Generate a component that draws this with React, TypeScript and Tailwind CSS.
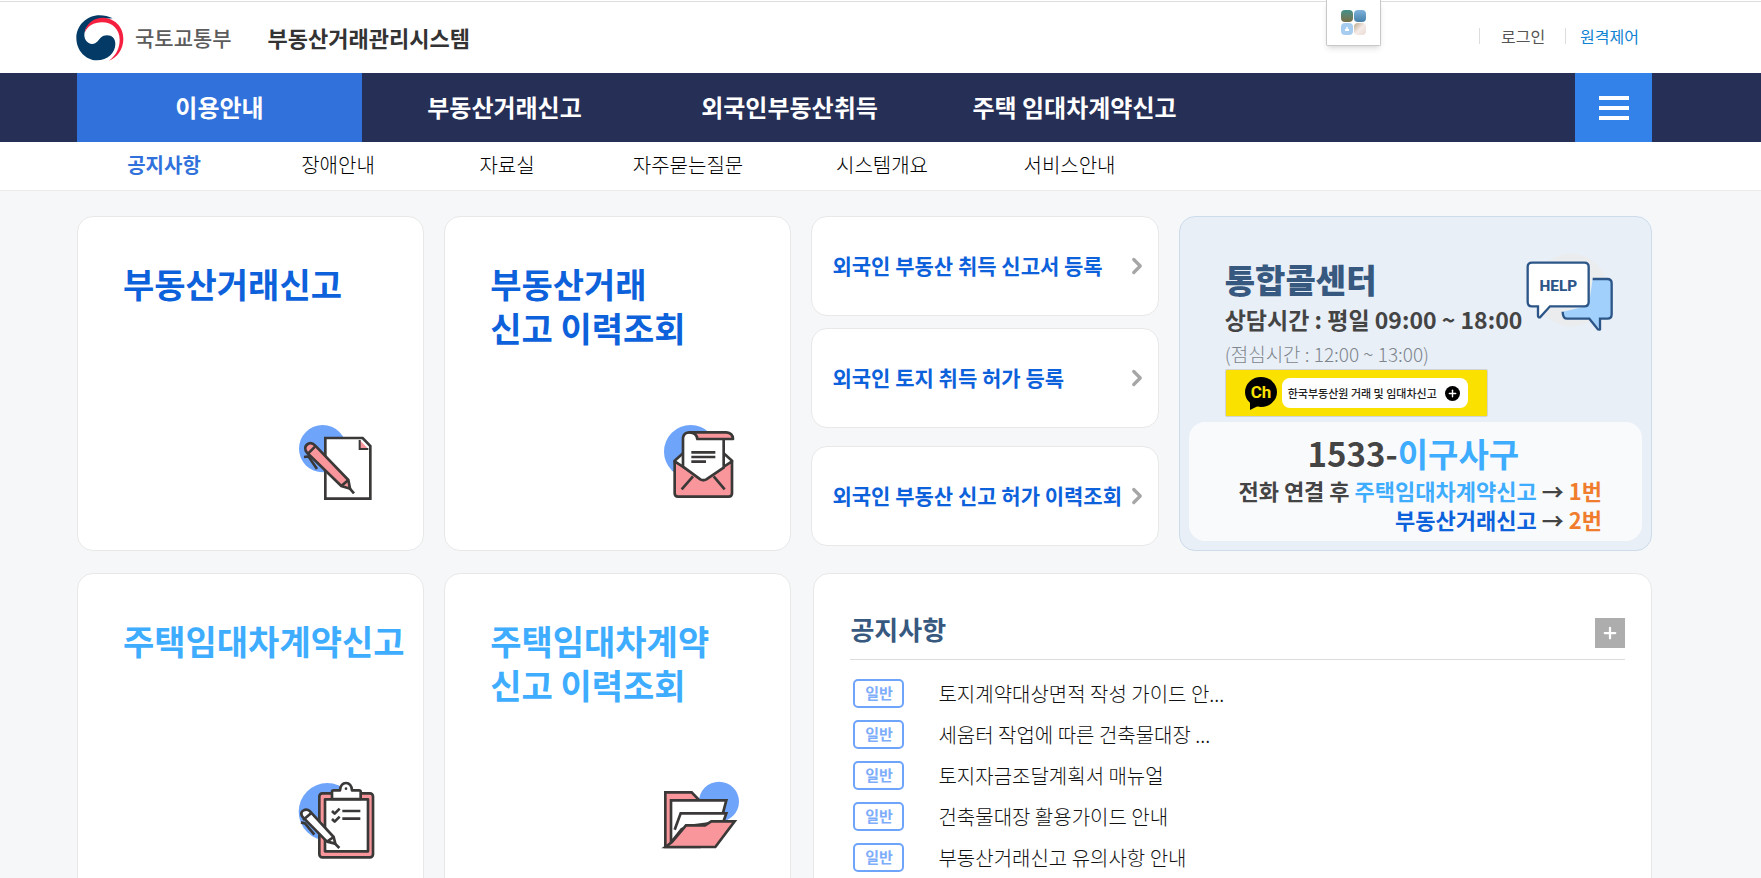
import type { ReactNode } from 'react'
import { ChevronRight, Plus } from 'lucide-react'

const mainMenu = ['이용안내', '부동산거래신고', '외국인부동산취득', '주택 임대차계약신고']

const subMenu = [
  { label: '공지사항', width: 'w-[174px]' },
  { label: '장애안내', width: 'w-[174px]' },
  { label: '자료실', width: 'w-[164px]' },
  { label: '자주묻는질문', width: 'w-[198px]' },
  { label: '시스템개요', width: 'w-[190px]' },
  { label: '서비스안내', width: 'w-[185px]' },
]

const notices = [
  '토지계약대상면적 작성 가이드 안...',
  '세움터 작업에 따른 건축물대장 ...',
  '토지자금조달계획서 매뉴얼',
  '건축물대장 활용가이드 안내',
  '부동산거래신고 유의사항 안내',
]

function Logo() {
  return (
    <svg className="h-[46px] w-12" viewBox="50 46 144 138" aria-hidden="true">
      <path
        fill="#033a66"
        d="M160 56C148 50 134 47 121 47C82 47 51 78 51 115C51 153 80 182 112 182C145 182 168 160 168 133C168 117 158 107 143 107C127 107 122 117 115 125C108 133 97 135 88 130C77 124 73 111 76 98C80 77 100 62 125 58Z"
      />
      <path
        fill="#f5203f"
        d="M76 100C78 76 98 56 128 54C165 54 192 80 192 117C192 148 175 172 149 183C169 167 181 147 181 120C181 90 160 68 128 68C104 68 83 80 76 100Z"
      />
    </svg>
  )
}

function WriteIcon() {
  return (
    <svg className="h-[120px] w-[130px]" viewBox="0 0 390 360" fill="none" stroke="#3b3838" strokeWidth="8" aria-hidden="true">
      <circle cx="155" cy="146" r="71" fill="#6fa4fb" stroke="none" />
      <path fill="#fff" d="M163 114H275L298 138V296H163Z" />
      <path fill="#f9969b" strokeWidth="6" d="M266 120V147H292" />
      <path fill="#f9969b" d="M104 152C98 134 118 122 132 136L232 240L237 266L211 258L108 158Z" />
      <path d="M109 163L132 140M211 258L232 240M236 265L249 280" />
      <path strokeWidth="8" d="M99 171L112 169L138 207" />
    </svg>
  )
}

function MailIcon() {
  return (
    <svg className="h-[120px] w-[130px]" viewBox="0 0 390 360" fill="none" stroke="#3b3838" strokeWidth="8" strokeLinejoin="round" aria-hidden="true">
      <circle cx="158" cy="155" r="80" fill="#6fa4fb" stroke="none" />
      <path fill="#fff" d="M110 182L135 160H257L282 182L270 250H120Z" />
      <path fill="#f9969b" d="M110 184L196 240L282 184V280Q282 290 272 290H120Q110 290 110 280Z" />
      <path d="M165 229L131 268M227 229L260 268" />
      <path fill="#fff" d="M135 200V114Q137 97 155 97H240L257 118V203L205 238Q196 243 187 238Z" />
      <path fill="#f9969b" d="M155 97H265Q284 98 285 117H178Q176 98 155 97Z" />
      <path d="M160 157H232M160 171H232M160 185H204" />
    </svg>
  )
}

function ClipboardIcon() {
  return (
    <svg className="h-[120px] w-[130px]" viewBox="0 -9 390 360" fill="none" stroke="#3b3838" strokeWidth="8" strokeLinejoin="round" aria-hidden="true">
      <circle cx="169" cy="155" r="86" fill="#6fa4fb" stroke="none" />
      <rect x="145" y="100" width="161" height="192" rx="9" fill="#f9969b" />
      <path fill="#fff" d="M162 118H291V274H162Z" />
      <path fill="#fff" d="M183 117V95Q183 91 188 91H207Q209 69 225 69Q241 69 243 91H264Q269 91 269 95V117Z" />
      <circle cx="225" cy="86" r="4" fill="#3b3838" stroke="none" />
      <path d="M214 153H268M214 176H268M183 153L191 161L206 146M183 177L191 185L206 170" />
      <path stroke="#fff" strokeWidth="16" d="M145 188L176 250" />
      <path fill="#fff" d="M94 170C84 154 104 142 117 154L188 231L193 251L168 245Z" />
      <path d="M96 180L122 158M168 245L188 231M189 248L205 264" />
      <path strokeWidth="8" d="M90 187L102 190L130 224" />
    </svg>
  )
}

function FolderIcon() {
  return (
    <svg className="h-[120px] w-[130px]" viewBox="0 -9 390 360" fill="none" stroke="#3b3838" strokeWidth="8" aria-hidden="true">
      <circle cx="243" cy="125" r="60" fill="#6fa4fb" stroke="none" />
      <path fill="#f9969b" d="M82 97H161L184 121V261H82Z" />
      <path fill="#fff" d="M99 121H265L245 196H140L99 248Z" />
      <path fill="#fff" d="M110 209L128 160H265L256 185L140 200" />
      <path fill="#f9969b" d="M82 261L102 246L144 196H201L220 184H290L232 261Z" />
    </svg>
  )
}

function HelpIcon() {
  return (
    <svg className="h-[78px] w-[88px]" viewBox="1068 142 264 234" aria-hidden="true">
      <circle cx="1203" cy="253" r="109" fill="#ebecee" />
      <path
        d="M1268 220H1312Q1325 220 1325 233V326Q1325 339 1312 339H1290V371L1262 339H1192Q1178 339 1178 318L1256 300Z"
        fill="#a2d0fd"
      />
      <path
        d="M1268 220H1312Q1325 220 1325 233V326Q1325 339 1312 339H1290V371Q1284 374 1280 366L1258 339H1192Q1178 339 1178 318"
        fill="none"
        stroke="#2d5688"
        strokeWidth="7"
      />
      <path
        d="M1086 171H1243Q1256 171 1256 184V289Q1256 302 1243 302H1140L1110 335Q1104 336 1104 330V302H1086Q1073 302 1073 289V184Q1073 171 1086 171Z"
        fill="#fff"
        stroke="#2d5688"
        strokeWidth="7"
      />
      <text x="1165" y="256" textAnchor="middle" fontSize="46" fontWeight="800" fill="#2d5688" className="font-['Roboto']">
        HELP
      </text>
    </svg>
  )
}

function ServiceCard({ children, icon, color }: { children: ReactNode; icon: ReactNode; color: string }) {
  return (
    <a
      href="#service"
      className="flex h-[335px] flex-col justify-between rounded-2xl border border-[#e8e8e8] bg-white pt-[45px] pr-[22px] pb-[30px] pl-[45px]"
    >
      <h2 className={`text-[34px] leading-[44px] font-bold whitespace-nowrap ${color}`}>{children}</h2>
      <span className="self-end">{icon}</span>
    </a>
  )
}

function QuickLink({ children, className = '' }: { children: ReactNode; className?: string }) {
  return (
    <a
      href="#quick"
      className={`flex h-[100px] items-center justify-between rounded-2xl border border-[#e8e8e8] bg-white pr-2 pl-5 text-[21px] font-bold whitespace-nowrap text-[#0d61db] ${className}`}
    >
      {children}
      <ChevronRight className="size-[26px] shrink-0 text-[#a6a6a6]" strokeWidth={3} />
    </a>
  )
}

function Header() {
  return (
    <header className="border-b border-[#ebebeb] bg-white">
      <div className="relative mt-px flex h-[72px] items-center border-t border-[#ddd] pr-[122px] pl-[76px]">
        <a href="#home" className="flex items-center">
          <Logo />
          <span className="ml-[11px] text-[21px] font-medium text-[#5c5c5c]">국토교통부</span>
          <span className="ml-9 text-[22px] font-bold text-[#333]">부동산거래관리시스템</span>
        </a>

        <button
          type="button"
          aria-label="바로가기"
          className="absolute -top-[2px] left-[1326px] flex h-[46px] w-[55px] items-center justify-center rounded-b-xs border border-t-0 border-[#c8c8c8] bg-white shadow-md"
        >
          <span className="grid grid-cols-2 gap-px">
            <span className="size-3 rounded-sm bg-linear-to-b from-[#3c9089] to-[#766f45]" />
            <span className="size-3 rounded-sm bg-linear-to-b from-[#7eb2dc] to-[#4580a8]" />
            <span className="flex size-3 flex-col items-center justify-center rounded-sm bg-[#a6cdef]">
              <span className="size-[2px] rounded-full bg-white" />
              <span className="h-[2px] w-1 bg-white" />
            </span>
            <span className="size-3 rounded-sm bg-linear-to-br from-[#b9a78f] via-[#f5ebe6] to-[#eadbd5]" />
          </span>
        </button>

        <div className="ml-auto flex items-center pb-1 text-[16px] leading-4">
          <a href="#login" className="border-l border-[#ddd] pr-5 pl-[21px] text-[#555]">
            로그인
          </a>
          <a href="#remote" className="border-l border-[#ddd] pl-[14px] text-[#0f82d2]">
            원격제어
          </a>
        </div>
      </div>

      <nav className="flex h-[69px] bg-[#262f56] pr-[109px] pl-[77px]">
        {mainMenu.map((item, i) => (
          <a
            key={item}
            href="#menu"
            className={`flex w-[285px] items-center justify-center pb-[2px] text-[24px] font-bold text-white ${i === 0 ? 'bg-[#3171db]' : ''}`}
          >
            {item}
          </a>
        ))}
        <button type="button" aria-label="전체메뉴" className="ml-auto flex w-[77px] flex-col items-center justify-center gap-[6px] bg-[#3382e9]">
          <span className="h-1 w-[30px] bg-white" />
          <span className="h-1 w-[30px] bg-white" />
          <span className="h-1 w-[30px] bg-white" />
        </button>
      </nav>

      <nav className="flex h-12 items-center pb-[2px] pl-[77px] text-[20px] font-light text-black">
        {subMenu.map((item, i) => (
          <a key={item.label} href="#sub" className={`${item.width} text-center ${i === 0 ? 'font-bold text-[#3171db]' : ''}`}>
            {item.label}
          </a>
        ))}
      </nav>
    </header>
  )
}

function CallCenter() {
  return (
    <section className="flex h-[335px] flex-col rounded-2xl border border-[#cddceb] bg-[#e8eff7] px-[9px] pb-[9px] whitespace-nowrap">
      <div className="flex justify-between pt-9 pr-7 pl-9">
        <div>
          <h2 className="mt-[6px] text-[33px] leading-10 font-black text-[#37587f]">통합콜센터</h2>
          <p className="text-[23px] leading-10 font-bold text-[#444]">상담시간 : 평일 09:00 ~ 18:00</p>
          <p className="text-[19px] leading-[30px] font-light text-[#7f858c]">(점심시간 : 12:00 ~ 13:00)</p>
        </div>
        <div className="-ml-6">
          <HelpIcon />
        </div>
      </div>
      <a href="#kakao" className="ml-9 flex h-12 w-[263px] items-center rounded-xs border border-[#d3d3d3] bg-[#fae100] pl-[18px]">
        <svg className="size-[34px]" viewBox="0 0 34 34" aria-hidden="true">
          <ellipse cx="17" cy="16" rx="16" ry="15" />
          <path d="M6 25V34L18 28Z" />
          <text x="17" y="22" textAnchor="middle" fontSize="17" fontWeight="700" fill="#fae100" className="font-['Roboto']">
            Ch
          </text>
        </svg>
        <span className="ml-1 flex h-[30px] items-center rounded-lg bg-white pr-2 pl-[6px] text-[11px] font-medium text-[#222]">
          한국부동산원 거래 및 임대차신고
          <span className="ml-2 flex size-[15px] items-center justify-center rounded-full bg-black">
            <Plus className="size-[11px] text-white" strokeWidth={3} />
          </span>
        </span>
      </a>
      <div className="mt-auto h-[119px] rounded-2xl bg-[#f9fafc] pt-[9px] pr-10 font-bold text-[#444]">
        <p className="pl-9 text-center text-[33px] leading-[45px]">
          1533-<span className="text-[#3fadff]">이구사구</span>
        </p>
        <p className="text-right text-[22px] leading-[29px]">
          전화 연결 후 <span className="text-[#3fadff]">주택임대차계약신고</span> → <span className="text-[#f07d2e]">1번</span>
        </p>
        <p className="text-right text-[22px] leading-[29px]">
          <span className="text-[#0d61db]">부동산거래신고</span> → <span className="text-[#f07d2e]">2번</span>
        </p>
      </div>
    </section>
  )
}

function NoticeBoard() {
  return (
    <section className="col-span-2 ml-[2px] rounded-2xl border border-[#e8e8e8] bg-white pt-9 pr-[26px] pl-9">
      <div className="flex h-[50px] items-center justify-between border-b border-[#ddd]">
        <h2 className="pb-3 text-[26px] leading-9 font-bold text-[#37587f]">공지사항</h2>
        <button type="button" aria-label="공지사항 더보기" className="mb-1 flex size-[30px] items-center justify-center bg-[#adadad] text-white">
          <Plus className="size-[18px]" strokeWidth={3} />
        </button>
      </div>
      <ul className="mt-[13px]">
        {notices.map((title) => (
          <li key={title} className="flex h-[41px] items-center pl-[3px]">
            <span className="flex h-[29px] w-[51px] items-center justify-center rounded-[5px] border-2 border-[#6fa4fb] text-[15px] font-bold text-[#7dadfb]">
              일반
            </span>
            <a href="#notice" className="ml-[34px] text-[20px] font-light text-[#111]">
              {title}
            </a>
          </li>
        ))}
      </ul>
    </section>
  )
}

export default function App() {
  return (
    <div className="min-h-screen bg-[#f5f7f9] font-['Noto_Sans_CJK_KR',sans-serif]">
      <Header />
      <main className="grid grid-cols-[minmax(0,347fr)_minmax(0,347fr)_minmax(0,347fr)_minmax(0,473fr)] gap-x-[20px] gap-y-[22px] pt-[25px] pr-[109px] pb-10 pl-[77px]">
        <ServiceCard color="text-[#0d61db]" icon={<WriteIcon />}>
          부동산거래신고
        </ServiceCard>
        <ServiceCard color="text-[#0d61db]" icon={<MailIcon />}>
          부동산거래
          <br />
          신고 이력조회
        </ServiceCard>
        <div>
          <QuickLink className="mb-3">외국인 부동산 취득 신고서 등록</QuickLink>
          <QuickLink className="mb-[18px]">외국인 토지 취득 허가 등록</QuickLink>
          <QuickLink>외국인 부동산 신고 허가 이력조회</QuickLink>
        </div>
        <CallCenter />

        <ServiceCard color="text-[#3fadff]" icon={<ClipboardIcon />}>
          주택임대차계약신고
        </ServiceCard>
        <ServiceCard color="text-[#3fadff]" icon={<FolderIcon />}>
          주택임대차계약
          <br />
          신고 이력조회
        </ServiceCard>
        <NoticeBoard />
      </main>
    </div>
  )
}
